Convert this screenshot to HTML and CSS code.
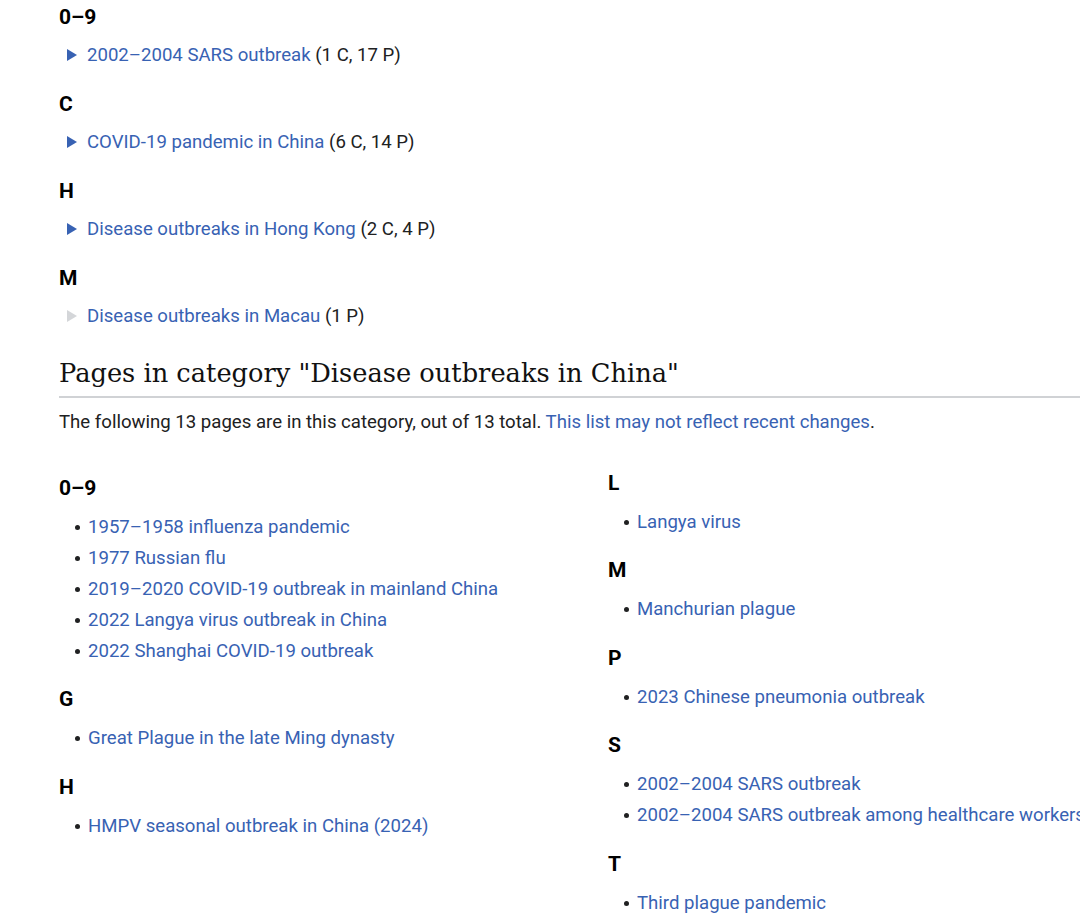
FILE: index.html
```html
<!DOCTYPE html>
<html lang="en">
<head>
<meta charset="utf-8">
<title>Category:Disease outbreaks in China</title>
<link rel="stylesheet" href="styles.css">
</head>
<body>
<div class="page">
  <div class="subcats">
    <div class="group">
      <h3 class="letter">0–9</h3>
      <div class="subcat"><span class="tri"></span><a href="#">2002–2004 SARS outbreak</a>&nbsp;(1 C, 17 P)</div>
    </div>
    <div class="group">
      <h3 class="letter">C</h3>
      <div class="subcat"><span class="tri"></span><a href="#">COVID-19 pandemic in China</a>&nbsp;(6 C, 14 P)</div>
    </div>
    <div class="group">
      <h3 class="letter">H</h3>
      <div class="subcat"><span class="tri"></span><a href="#">Disease outbreaks in Hong Kong</a>&nbsp;(2 C, 4 P)</div>
    </div>
    <div class="group">
      <h3 class="letter">M</h3>
      <div class="subcat"><span class="tri empty"></span><a href="#">Disease outbreaks in Macau</a>&nbsp;(1 P)</div>
    </div>
  </div>

  <h2 class="title">Pages in category "Disease outbreaks in China"</h2>
  <p class="intro">The following 13 pages are in this category, out of 13 total. <a href="#">This list may not reflect recent changes</a>.</p>

  <div class="columns">
    <div class="col col-first">
      <div class="pgroup">
        <h3 class="letter">0–9</h3>
        <ul class="plist">
          <li><a href="#">1957–1958 influenza pandemic</a></li>
          <li><a href="#">1977 Russian flu</a></li>
          <li><a href="#">2019–2020 COVID-19 outbreak in mainland China</a></li>
          <li><a href="#">2022 Langya virus outbreak in China</a></li>
          <li><a href="#">2022 Shanghai COVID-19 outbreak</a></li>
        </ul>
      </div>
      <div class="pgroup">
        <h3 class="letter">G</h3>
        <ul class="plist">
          <li><a href="#">Great Plague in the late Ming dynasty</a></li>
        </ul>
      </div>
      <div class="pgroup">
        <h3 class="letter">H</h3>
        <ul class="plist">
          <li><a href="#">HMPV seasonal outbreak in China (2024)</a></li>
        </ul>
      </div>
    </div>
    <div class="col">
      <div class="pgroup">
        <h3 class="letter">L</h3>
        <ul class="plist">
          <li><a href="#">Langya virus</a></li>
        </ul>
      </div>
      <div class="pgroup">
        <h3 class="letter">M</h3>
        <ul class="plist">
          <li><a href="#">Manchurian plague</a></li>
        </ul>
      </div>
      <div class="pgroup">
        <h3 class="letter">P</h3>
        <ul class="plist">
          <li><a href="#">2023 Chinese pneumonia outbreak</a></li>
        </ul>
      </div>
      <div class="pgroup">
        <h3 class="letter">S</h3>
        <ul class="plist">
          <li><a href="#">2002–2004 SARS outbreak</a></li>
          <li><a href="#">2002–2004 SARS outbreak among healthcare workers</a></li>
        </ul>
      </div>
      <div class="pgroup">
        <h3 class="letter">T</h3>
        <ul class="plist">
          <li><a href="#">Third plague pandemic</a></li>
        </ul>
      </div>
    </div>
  </div>
</div>
</body>
</html>
```

FILE: styles.css
```css
html, body {
  margin: 0;
  padding: 0;
  background: #ffffff;
}

body {
  overflow: hidden;
  font-family: Roboto, "Liberation Sans", sans-serif;
  font-size: 18.6px;
  color: #202122;
}

a {
  color: #3862b3;
  text-decoration: none;
}

.page {
  width: 1140px;
  padding: 1.5px 0 0 59px;
}

.letter {
  margin: 0;
  font-size: 21px;
  font-weight: 700;
  line-height: 30px;
  color: #000;
}

/* Subcategories */
.group {
  margin-bottom: 18px;
}

.group .letter {
  margin-bottom: 8px;
}

.subcat {
  display: flex;
  align-items: center;
  line-height: 31px;
  padding-left: 8px;
  white-space: nowrap;
}

.tri {
  width: 0;
  height: 0;
  border-top: 6px solid transparent;
  border-bottom: 6px solid transparent;
  border-left: 10px solid #3862b3;
  margin-right: 10px;
}

.tri.empty {
  border-left-color: #d4d6d9;
}

/* Title */
.title {
  margin: 23px 0 0 0;
  font-family: "DejaVu Serif", "Liberation Serif", serif;
  font-weight: 400;
  font-size: 25.7px;
  line-height: 36px;
  color: #111;
  padding-bottom: 5px;
  border-bottom: 2px solid #d0d2d5;
}

.intro {
  margin: 9px 0 0 0;
  line-height: 31px;
}

/* Columns */
.columns {
  display: grid;
  grid-template-columns: 549px 549px;
  margin-top: 30px;
  align-items: start;
}

.col-first {
  padding-top: 5px;
}

.pgroup {
  margin-bottom: 17.5px;
}

.pgroup .letter {
  margin-bottom: 9px;
}

.plist {
  list-style: none;
  margin: 0;
  padding: 0;
}

.plist li {
  display: flex;
  align-items: center;
  line-height: 31px;
  white-space: nowrap;
}

.plist li::before {
  content: "";
  flex: none;
  width: 5px;
  height: 5px;
  border-radius: 50%;
  background: #202122;
  margin-left: 16px;
  margin-right: 8px;
}
```
